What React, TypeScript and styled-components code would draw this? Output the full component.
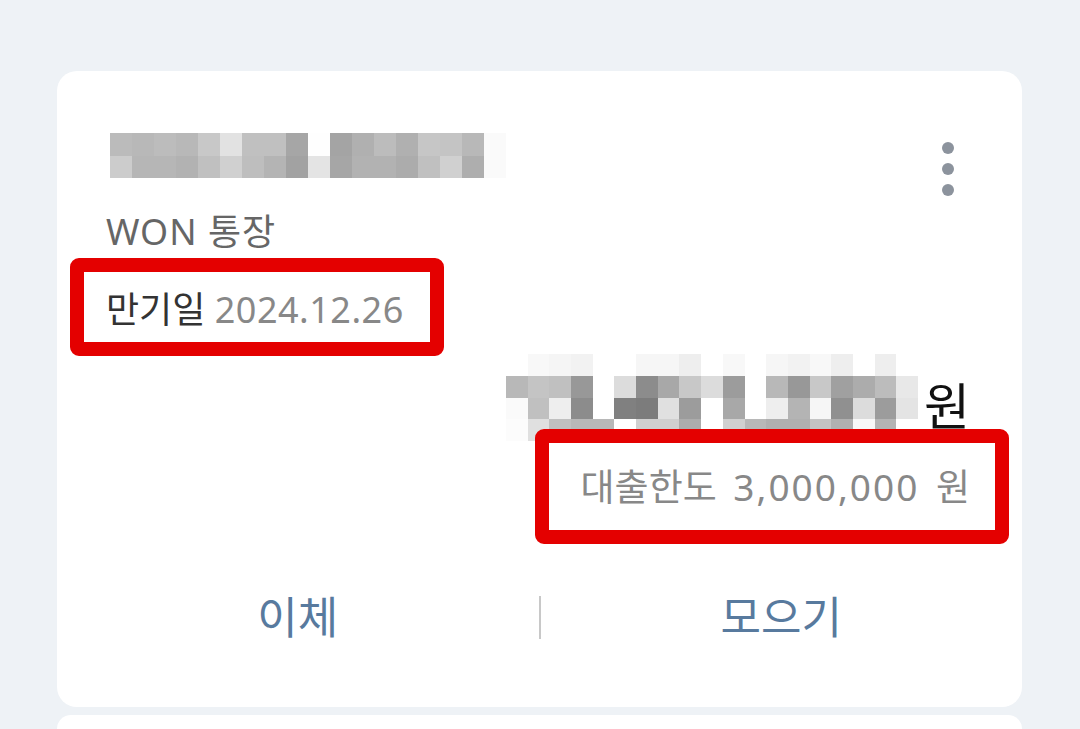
import React from "react";
import styled, { createGlobalStyle } from "styled-components";

const GlobalStyle = createGlobalStyle`
  html, body {
    margin: 0;
    padding: 0;
    background: #eef2f6;
    overflow: hidden;
  }
  body {
    font-family: "Noto Sans", "Noto Sans CJK KR", sans-serif;
  }
`;

const Page = styled.div`
  width: 1080px;
  height: 729px;
  box-sizing: border-box;
  padding: 71px 58px 0 57px;
  display: flex;
  flex-direction: column;
  gap: 8px;
  overflow: hidden;
`;

const Card = styled.section`
  background: #ffffff;
  border-radius: 20px;
  height: 636px;
  box-sizing: border-box;
  display: flex;
  flex-direction: column;
  padding-bottom: 63px;
  flex-shrink: 0;
`;

const NextCard = styled.div`
  background: #ffffff;
  border-radius: 20px 20px 0 0;
  flex: 1;
`;

const Body = styled.div`
  display: flex;
  flex-direction: column;
  padding: 62px 52px 0 49px;
`;

const TopRow = styled.div`
  display: flex;
  justify-content: space-between;
  align-items: flex-start;
  padding-left: 4px;
`;

const MosaicGrid = styled.div<{ $cols: number; $w: number; $h: number }>`
  display: grid;
  grid-template-columns: repeat(${(p) => p.$cols}, ${(p) => p.$w}px);
  grid-auto-rows: ${(p) => p.$h}px;
`;

const Cell = styled.span<{ $tone: string }>`
  background: #${(p) => p.$tone}${(p) => p.$tone}${(p) => p.$tone};
`;

const Dots = styled.button`
  display: flex;
  flex-direction: column;
  gap: 9px;
  margin: 9px 16px 0 0;
  padding: 0;
  border: 0;
  background: transparent;
`;

const Dot = styled.span`
  width: 12px;
  height: 12px;
  border-radius: 50%;
  background: #8c939d;
`;

const AccountType = styled.div`
  margin-top: 14px;
  font-size: 36px;
  line-height: 43px;
  letter-spacing: 1px;
  color: #666666;
`;

const Framed = styled.div<{ $t: number; $r: number; $b: number; $l: number }>`
  position: relative;
  width: fit-content;
  &::after {
    content: "";
    position: absolute;
    top: ${(p) => p.$t}px;
    right: ${(p) => p.$r}px;
    bottom: ${(p) => p.$b}px;
    left: ${(p) => p.$l}px;
    border: 14px solid #e40000;
    border-radius: 9px;
    pointer-events: none;
  }
`;

const Maturity = styled(Framed)`
  margin-top: 35px;
  font-size: 36px;
  line-height: 43px;
`;

const Label = styled.span`
  color: #333333;
`;

const Value = styled.span`
  color: #888888;
  letter-spacing: 0.5px;
`;

const AmountRow = styled.div`
  align-self: flex-end;
  display: flex;
  align-items: flex-start;
  margin-top: 23px;
  height: 87px;
`;

const Won = styled.span`
  font-size: 50px;
  line-height: 1;
  color: #111111;
  margin: 27px 0 0 6px;
`;

const Limit = styled(Framed)`
  align-self: flex-end;
  margin-top: 24px;
  font-size: 37px;
  line-height: 43px;
  word-spacing: 7px;
  color: #888888;
`;

const Figure = styled.span`
  letter-spacing: 2px;
`;

const Actions = styled.div`
  margin-top: auto;
  display: grid;
  grid-template-columns: 1fr 2px 1fr;
  align-items: center;
`;

const Action = styled.button`
  border: 0;
  background: transparent;
  padding: 0;
  font-family: inherit;
  font-size: 44px;
  line-height: 53px;
  color: #587a9e;
  text-align: center;
`;

const Divider = styled.span`
  width: 2px;
  height: 43px;
  background: #c8c8c8;
`;

const nameTones = [
  ["bb", "b8", "bc", "b8", "c8", "e2", "c0", "c0", "a6", "fe", "a4", "b0", "bc", "b0", "c6", "c4", "b8", "fa"],
  ["cc", "b6", "b6", "b2", "c0", "d0", "be", "b4", "a2", "e4", "a6", "b2", "b2", "ac", "c0", "d0", "ae", "fa"],
];

const amountTones = [
  ["ff", "f8", "f5", "f2", "ff", "ff", "f6", "f6", "ee", "ff", "f8", "ff", "f6", "f2", "f8", "ee", "ff", "ee", "ff"],
  ["b8", "c4", "c0", "98", "ff", "dc", "8c", "a8", "c8", "dc", "9c", "ff", "b8", "98", "c8", "a0", "ac", "bc", "e8"],
  ["fa", "c0", "ee", "8c", "ff", "80", "7c", "e0", "9c", "ff", "a8", "ff", "ee", "b4", "f6", "90", "dc", "9c", "e4"],
  ["fc", "e0", "c0", "b8", "b8", "ff", "d0", "d0", "ac", "ff", "d0", "b8", "b0", "b0", "c4", "b0", "f8", "b4", "ff"],
];

function Mosaic({ tones, w, h }: { tones: string[][]; w: number; h: number }) {
  return (
    <MosaicGrid $cols={tones[0].length} $w={w} $h={h}>
      {tones.flatMap((row, r) => row.map((t, c) => <Cell key={`${r}-${c}`} $tone={t} />))}
    </MosaicGrid>
  );
}

export default function App() {
  return (
    <>
      <GlobalStyle />
      <Page>
        <Card>
          <Body>
            <TopRow>
              <Mosaic tones={nameTones} w={22} h={22.5} />
              <Dots aria-label="more">
                <Dot />
                <Dot />
                <Dot />
              </Dots>
            </TopRow>
            <AccountType>WON 통장</AccountType>
            <Maturity $t={-30} $r={-40} $b={-25} $l={-36}>
              <Label>만기일</Label> <Value>2024.12.26</Value>
            </Maturity>
            <AmountRow>
              <Mosaic tones={amountTones} w={21.7} h={21.75} />
              <Won>원</Won>
            </AmountRow>
            <Limit $t={-36} $r={-39} $b={-36} $l={-46}>
              대출한도 <Figure>3,000,000</Figure> 원
            </Limit>
          </Body>
          <Actions>
            <Action>이체</Action>
            <Divider />
            <Action>모으기</Action>
          </Actions>
        </Card>
        <NextCard />
      </Page>
    </>
  );
}
